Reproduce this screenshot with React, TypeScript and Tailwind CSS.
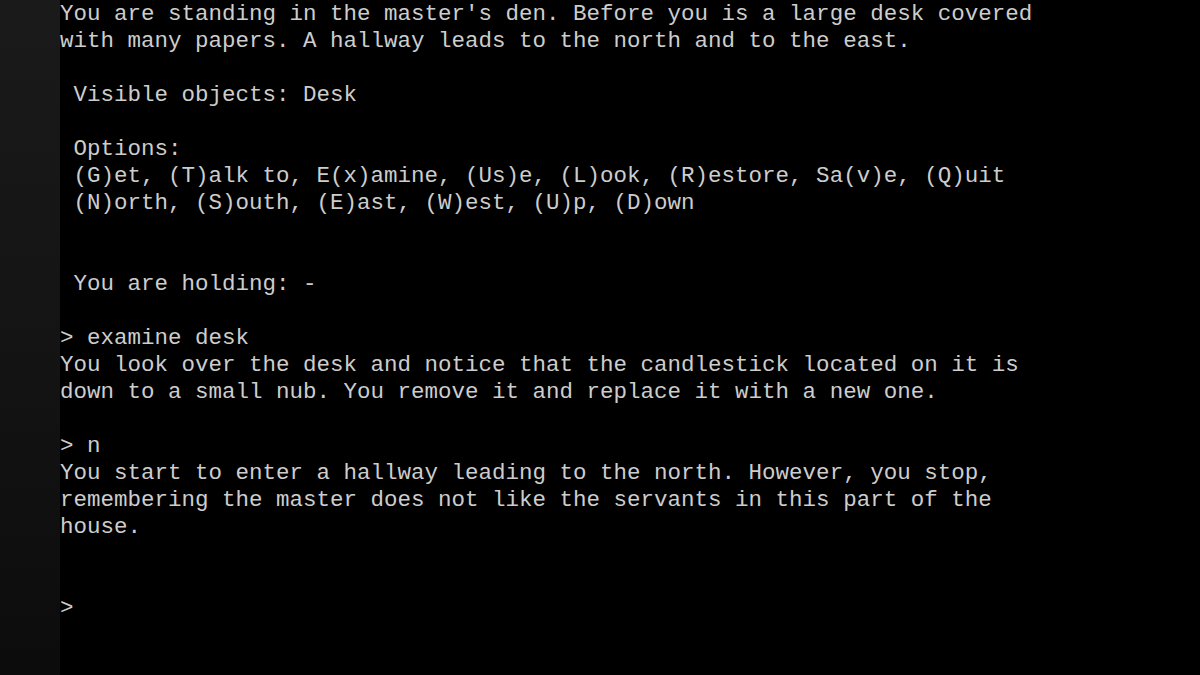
const lines = [
  "You are standing in the master's den. Before you is a large desk covered",
  "with many papers. A hallway leads to the north and to the east.",
  "",
  " Visible objects: Desk",
  "",
  " Options:",
  " (G)et, (T)alk to, E(x)amine, (Us)e, (L)ook, (R)estore, Sa(v)e, (Q)uit",
  " (N)orth, (S)outh, (E)ast, (W)est, (U)p, (D)own",
  "",
  "",
  " You are holding: -",
  "",
  "> examine desk",
  "You look over the desk and notice that the candlestick located on it is",
  "down to a small nub. You remove it and replace it with a new one.",
  "",
  "> n",
  "You start to enter a hallway leading to the north. However, you stop,",
  "remembering the master does not like the servants in this part of the",
  "house.",
  "",
  "",
  ">",
];

export default function App() {
  return (
    <div className="flex w-[1200px] h-[675px] overflow-hidden bg-black">
      <div className="w-[60px] shrink-0 bg-gradient-to-b from-[#1a1a1a] via-[#141414] to-[#0c0c0c]" />
      <div
        className="flex-1 pt-px text-[#cdcdcd] text-[22.5px] leading-[27px] whitespace-pre"
        style={{ fontFamily: '"Liberation Mono", "DejaVu Sans Mono", monospace' }}
      >
        {lines.map((line, i) => (
          <div key={i} className="h-[27px]">
            {line}
          </div>
        ))}
      </div>
    </div>
  );
}
